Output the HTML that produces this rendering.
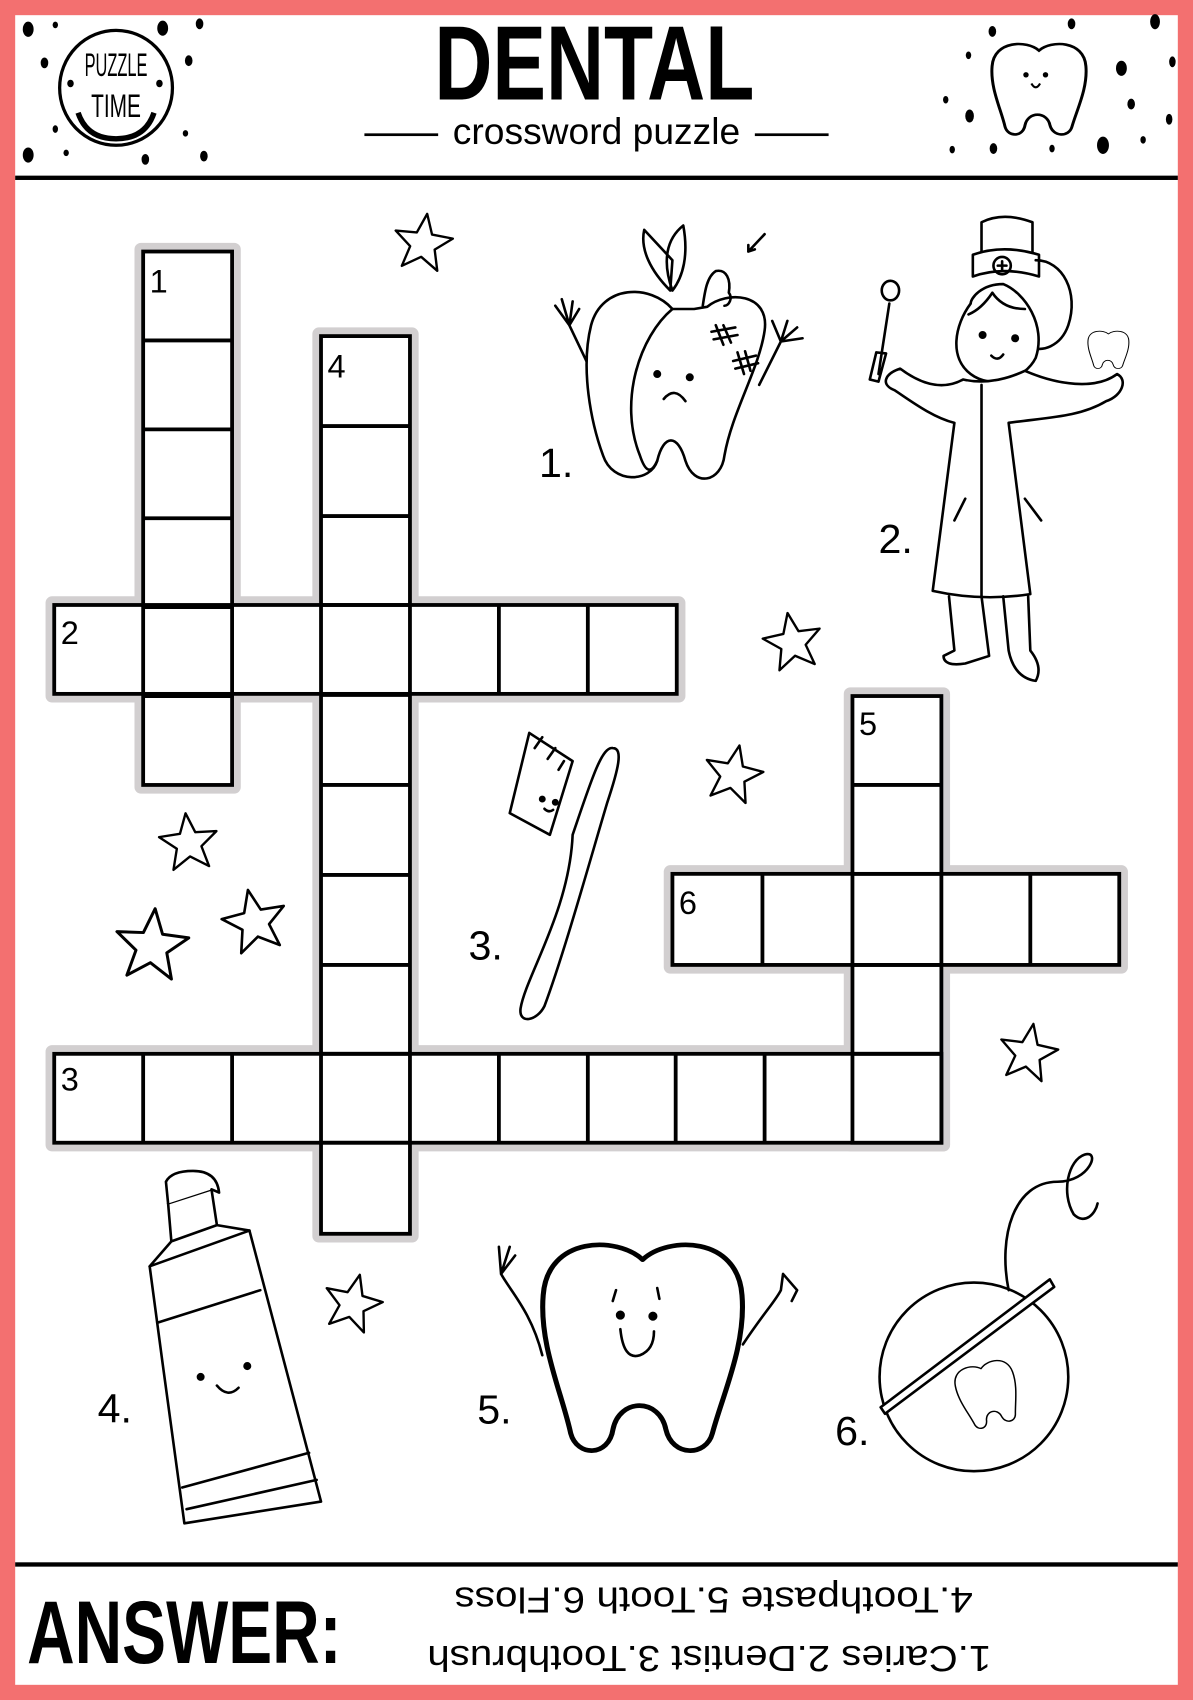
<!DOCTYPE html>
<html><head><meta charset="utf-8"><style>
html,body{margin:0;padding:0;background:#f37070;}
svg{display:block}
text{font-family:"Liberation Sans",sans-serif}
</style></head><body>
<svg width="1193" height="1700" viewBox="0 0 1100 1568" preserveAspectRatio="none" xmlns="http://www.w3.org/2000/svg">
<defs>
<path id="star" d="M0,-28 L7.1,-9.7 L26.6,-8.7 L11.4,3.7 L16.5,22.7 L0,12 L-16.5,22.7 L-11.4,3.7 L-26.6,-8.7 L-7.1,-9.7 Z" fill="#fff" stroke="#000" stroke-width="2.2" stroke-linejoin="round"/>
<path id="tooth" d="M50,12 C38,0 5,0 3,30 C1,55 12,80 16,100 C19,112 34,112 36,98 C39,82 58,82 61,98 C64,112 80,112 83,100 C88,80 99,55 97,30 C95,0 62,0 50,12 Z"/>
</defs>
<rect x="0" y="0" width="1100" height="1568" fill="#f37070"/>
<rect x="14" y="14" width="1072" height="1540" fill="#fff"/>
<rect x="14" y="162" width="1072" height="4" fill="#000"/>
<rect x="14" y="1441" width="1072" height="4" fill="#000"/>

<!-- header logo -->
<g fill="#000">
<ellipse cx="26" cy="27" rx="5" ry="7"/><ellipse cx="51" cy="23" rx="2.5" ry="3"/><ellipse cx="150" cy="26" rx="5" ry="7"/><ellipse cx="184" cy="22" rx="3.5" ry="5"/>
<ellipse cx="41" cy="58" rx="3.5" ry="5"/><ellipse cx="174" cy="56" rx="3.5" ry="5"/><ellipse cx="65" cy="77" rx="3" ry="3.5"/><ellipse cx="147" cy="77" rx="3" ry="3.5"/>
<ellipse cx="51" cy="119" rx="2.5" ry="3.5"/><ellipse cx="171" cy="123" rx="2.5" ry="3"/>
<ellipse cx="26" cy="143" rx="5" ry="7"/><ellipse cx="61" cy="141" rx="2.5" ry="3"/><ellipse cx="134" cy="147" rx="3.5" ry="5"/><ellipse cx="188" cy="144" rx="3.5" ry="5"/>
</g>
<ellipse cx="107" cy="81" rx="52" ry="53" fill="none" stroke="#000" stroke-width="3"/>
<path d="M72,104 Q80,128 107,128 Q134,128 142,104" fill="none" stroke="#000" stroke-width="5"/>
<text x="107" y="70" text-anchor="middle" font-size="30" textLength="58" lengthAdjust="spacingAndGlyphs">PUZZLE</text>
<text x="107" y="108" text-anchor="middle" font-size="30" textLength="46" lengthAdjust="spacingAndGlyphs">TIME</text>

<text x="548" y="92" text-anchor="middle" font-size="98" font-weight="bold" textLength="295" lengthAdjust="spacingAndGlyphs">DENTAL</text>
<text x="550" y="133" text-anchor="middle" font-size="34" textLength="265" lengthAdjust="spacingAndGlyphs">crossword puzzle</text>
<rect x="336" y="123" width="68" height="2.5" fill="#000"/><rect x="696" y="123" width="68" height="2.5" fill="#000"/>

<!-- header tooth -->
<use href="#tooth" transform="translate(912,37) scale(0.92,0.8)" fill="#fff" stroke="#000" stroke-width="3"/>
<circle cx="946" cy="69" r="2.5"/><circle cx="964" cy="69" r="2.5"/>
<path d="M951,77 Q955,84 959,77" fill="none" stroke="#000" stroke-width="2"/>
<g fill="#000">
<ellipse cx="915" cy="29" rx="3.5" ry="5"/><ellipse cx="988" cy="22" rx="3.5" ry="5"/><ellipse cx="1065" cy="20" rx="4.5" ry="7"/>
<ellipse cx="893" cy="51" rx="2.5" ry="3.5"/><ellipse cx="1034" cy="63" rx="5" ry="7"/><ellipse cx="1081" cy="57" rx="3" ry="5"/>
<ellipse cx="872" cy="92" rx="2.5" ry="3.5"/><ellipse cx="894" cy="107" rx="4" ry="6"/><ellipse cx="1043" cy="96" rx="3.5" ry="5"/><ellipse cx="1078" cy="110" rx="3" ry="5"/>
<ellipse cx="878" cy="138" rx="2.5" ry="3.5"/><ellipse cx="916" cy="137" rx="3.5" ry="5"/><ellipse cx="970" cy="137" rx="2.5" ry="3.5"/><ellipse cx="1017" cy="134" rx="5.5" ry="8"/><ellipse cx="1054" cy="129" rx="2.5" ry="3.5"/>
</g>

<!-- grid halos -->
<g fill="#d2cfd0">
<rect x="124" y="224" width="98" height="508" rx="6"/>
<rect x="288" y="302" width="98" height="844" rx="6"/>
<rect x="42" y="550" width="590" height="98" rx="6"/>
<rect x="778" y="634" width="98" height="428" rx="6"/>
<rect x="612" y="798" width="428" height="100" rx="6"/>
<rect x="42" y="964" width="834" height="98" rx="6"/>
</g>
<g fill="#fff" stroke="#000" stroke-width="3.5">
<rect x="132" y="232" width="82" height="492"/>
<rect x="296" y="310" width="82" height="828"/>
<rect x="50" y="558" width="574" height="82"/>
<rect x="786" y="642" width="82" height="412"/>
<rect x="620" y="806" width="412" height="84"/>
<rect x="50" y="972" width="818" height="82"/>
</g>
<g stroke="#000" stroke-width="3.5">
<line x1="132" y1="314" x2="214" y2="314"/><line x1="132" y1="396" x2="214" y2="396"/><line x1="132" y1="478" x2="214" y2="478"/><line x1="132" y1="560" x2="214" y2="560"/><line x1="132" y1="642" x2="214" y2="642"/>
<line x1="296" y1="393" x2="378" y2="393"/><line x1="296" y1="476" x2="378" y2="476"/><line x1="296" y1="558" x2="378" y2="558"/><line x1="296" y1="641" x2="378" y2="641"/><line x1="296" y1="724" x2="378" y2="724"/><line x1="296" y1="807" x2="378" y2="807"/><line x1="296" y1="890" x2="378" y2="890"/><line x1="296" y1="972" x2="378" y2="972"/><line x1="296" y1="1054" x2="378" y2="1054"/>
<line x1="132" y1="558" x2="132" y2="640"/><line x1="214" y1="558" x2="214" y2="640"/><line x1="296" y1="558" x2="296" y2="640"/><line x1="378" y1="558" x2="378" y2="640"/><line x1="460" y1="558" x2="460" y2="640"/><line x1="542" y1="558" x2="542" y2="640"/>
<line x1="786" y1="724" x2="868" y2="724"/><line x1="786" y1="806" x2="868" y2="806"/><line x1="786" y1="890" x2="868" y2="890"/><line x1="786" y1="972" x2="868" y2="972"/>
<line x1="703" y1="806" x2="703" y2="890"/><line x1="786" y1="806" x2="786" y2="890"/><line x1="868" y1="806" x2="868" y2="890"/><line x1="950" y1="806" x2="950" y2="890"/>
<line x1="132" y1="972" x2="132" y2="1054"/><line x1="214" y1="972" x2="214" y2="1054"/><line x1="296" y1="972" x2="296" y2="1054"/><line x1="378" y1="972" x2="378" y2="1054"/><line x1="460" y1="972" x2="460" y2="1054"/><line x1="542" y1="972" x2="542" y2="1054"/><line x1="623" y1="972" x2="623" y2="1054"/><line x1="705" y1="972" x2="705" y2="1054"/><line x1="786" y1="972" x2="786" y2="1054"/>
</g>
<g font-size="30">
<text x="138" y="270">1</text><text x="302" y="348">4</text><text x="56" y="594">2</text>
<text x="792" y="678">5</text><text x="626" y="843">6</text><text x="56" y="1006">3</text>
</g>

<!-- stars -->
<use href="#star" transform="translate(390,225) rotate(8)"/>
<use href="#star" transform="translate(731,593) rotate(-10)"/>
<use href="#star" transform="translate(676,715) rotate(12)"/>
<use href="#star" transform="translate(174,778) rotate(-6)"/>
<use href="#star" transform="translate(140,873) rotate(5) scale(1.25)"/>
<use href="#star" transform="translate(235,851) rotate(-12) scale(1.1)"/>
<use href="#star" transform="translate(948,972) rotate(10)"/>
<use href="#star" transform="translate(325,1203) rotate(14)"/>

<g font-size="38" fill="#000">
<text x="497" y="440">1.</text><text x="810" y="510">2.</text><text x="432" y="885">3.</text>
<text x="90" y="1312">4.</text><text x="440" y="1313">5.</text><text x="770" y="1333">6.</text>
</g>

<g fill="none" stroke="#000" stroke-width="2.4" stroke-linecap="round" stroke-linejoin="round">
<!-- 1 caries tooth -->
<path d="M545,342 L525,300 M525,300 L512,282 M525,300 L518,276 M525,300 L528,278 M525,300 L534,285"/>
<path d="M700,355 L720,315 M720,315 L712,296 M720,315 L726,296 M720,315 L735,302 M720,315 L740,312"/>
<path d="M620,285 C600,262 555,262 545,300 C535,340 545,390 556,420 C565,447 600,445 606,425 C612,400 625,400 632,425 C640,450 665,445 668,420 C675,380 700,340 705,305 C710,270 670,268 652,283 L640,285 Z" fill="#fff"/>
<path d="M620,285 C590,310 570,370 590,420 C595,435 600,438 606,425"/>
<path d="M618,268 C600,250 590,230 594,212 L620,240 Z M620,268 C610,240 615,220 630,208 C635,235 630,255 620,268"/>
<path d="M648,282 C650,268 652,255 660,250 C670,248 674,258 672,270 C676,275 672,282 668,282"/>
<path d="M690,232 L705,216 M690,232 L696,230 M690,232 L690,226"/>
<circle cx="606" cy="345" r="2.5" fill="#000"/><circle cx="636" cy="348" r="2.5" fill="#000"/>
<path d="M612,368 Q622,356 632,370"/>
<path d="M660,300 L667,318 M667,300 L674,316 M656,306 L678,302 M658,313 L680,309"/>
<path d="M680,325 L686,345 M687,324 L692,342 M676,333 L697,328 M678,340 L699,335"/>
<!-- dentist -->
<path d="M905,235 L905,205 Q925,195 952,205 L952,233 Z" fill="#fff"/>
<path d="M897,235 L897,255 Q925,245 958,255 L958,235 Q925,225 897,235 Z" fill="#fff"/>
<circle cx="924" cy="245" r="8"/><path d="M920,245 L928,245 M924,241 L924,249"/>
<path d="M955,240 C980,240 995,270 985,300 C978,320 960,325 950,320"/>
<path d="M895,280 C880,300 875,330 895,345 C915,360 945,350 955,330 C965,300 945,270 925,262 C905,262 895,275 895,280 Z" fill="#fff"/>
<path d="M893,290 Q905,285 915,270 Q925,285 945,285"/>
<circle cx="906" cy="309" r="2.5" fill="#000"/><circle cx="936" cy="312" r="2.5" fill="#000"/>
<path d="M914,328 Q920,334 925,327"/>
<path d="M888,350 C870,360 850,355 830,340 C815,345 812,355 825,360 C840,370 860,385 880,390 L860,545 Q905,555 950,548 L930,390 C965,385 995,385 1020,370 C1035,365 1040,350 1030,345 C1010,360 975,355 945,342 Q915,356 888,350 Z" fill="#fff"/>
<path d="M905,355 L905,550 M890,460 L880,480 M945,460 L960,480"/>
<path d="M875,550 L880,600 L870,605 Q870,615 890,612 L912,605 L905,550 M925,550 L930,600 Q935,625 955,628 Q962,615 950,600 L948,550"/>
<path d="M810,345 L820,280 M802,350 L808,325 L817,326 L810,352 Z" fill="#fff"/>
<ellipse cx="821" cy="268" rx="8" ry="9" fill="#fff"/>
<use href="#tooth" transform="translate(1002,304) scale(0.4,0.33)" fill="#fff"/>
<!-- toothbrush -->
<path d="M488,676 L470,750 L507,770 L528,702 Z" fill="#fff"/>
<path d="M493,690 L500,680 M505,700 L512,690 M515,710 L520,702"/>
<path d="M528,770 C525,840 485,900 480,930 C478,945 495,942 502,928 C520,880 545,790 560,740 C570,710 575,690 565,690 C555,688 545,720 528,770 Z" fill="#fff"/>
<circle cx="500" cy="737" r="2" fill="#000"/><circle cx="512" cy="740" r="2" fill="#000"/><path d="M502,746 Q506,750 510,747"/>
<!-- toothpaste -->
<path d="M150,1258 L138,1168 L230,1135 L296,1385 L170,1405 Z" fill="#fff"/>
<path d="M138,1168 L158,1145 L200,1130 L230,1135 M158,1145 L155,1110 L195,1097 L200,1130"/>
<path d="M155,1110 L153,1090 Q158,1080 178,1080 Q200,1080 202,1100 L195,1097" fill="#fff"/>
<path d="M145,1220 L240,1190 M168,1372 L285,1340 M172,1392 L292,1365"/>
<circle cx="185" cy="1270" r="2.5" fill="#000"/><circle cx="228" cy="1260" r="2.5" fill="#000"/>
<path d="M200,1278 Q210,1290 220,1280"/>
<!-- tooth 5 -->
<path d="M500,1250 C490,1210 470,1190 462,1175 M462,1175 L460,1150 M462,1175 L470,1150 M462,1175 L475,1158"/>
<path d="M685,1240 C705,1210 715,1200 720,1190 L722,1175 L735,1190 L730,1200"/>
<use href="#tooth" transform="translate(495,1140) scale(1.95,1.82)" fill="#fff"/>
<circle cx="572" cy="1213" r="3" fill="#000"/><circle cx="602" cy="1214" r="3" fill="#000"/>
<path d="M572,1226 Q575,1255 590,1250 Q603,1245 603,1228"/>
<path d="M568,1190 L565,1200 M606,1188 L608,1198"/>
<!-- floss -->
<circle cx="898" cy="1270" r="87" fill="#fff"/>
<path d="M930,1190 C920,1140 935,1090 975,1090 C1005,1090 1015,1060 1000,1065 C985,1070 978,1100 990,1120 C1000,1130 1010,1120 1012,1110"/>
<path d="M812,1298 L968,1180 L972,1187 L816,1304 Z" fill="#fff"/>
<use href="#tooth" transform="translate(882,1255) scale(0.58,0.55) rotate(-15,50,55)" fill="#fff"/>
</g>

<!-- answer -->
<text x="25" y="1534" font-size="82" font-weight="bold" textLength="290" lengthAdjust="spacingAndGlyphs">ANSWER:</text>
<g transform="rotate(180 654 1504)" font-size="33" font-family="'DejaVu Sans',sans-serif">
<text x="654" y="1490" text-anchor="middle" textLength="520" lengthAdjust="spacingAndGlyphs">1.Caries 2.Dentist 3.Toothbrush</text>
<text x="650" y="1544" text-anchor="middle" textLength="478" lengthAdjust="spacingAndGlyphs">4.Toothpaste 5.Tooth 6.Floss</text>
</g>
</svg>
</body></html>
